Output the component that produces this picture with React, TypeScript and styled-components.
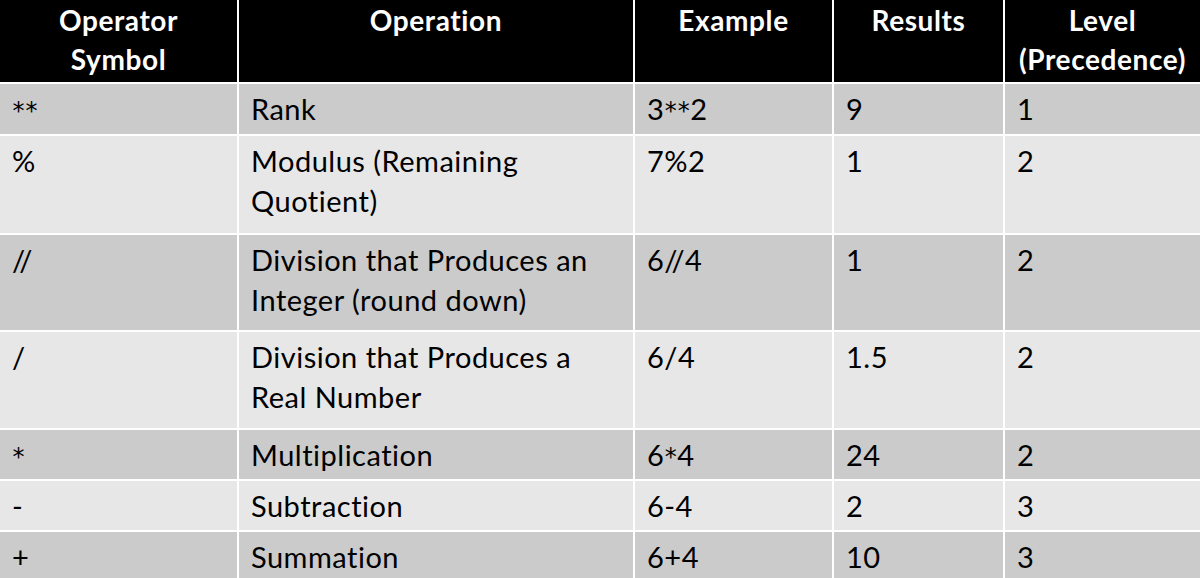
import React from "react";
import styled, { createGlobalStyle } from "styled-components";

const Global = createGlobalStyle`
  html, body { margin: 0; padding: 0; background: #ffffff; }
  body { font-family: Lato, "Open Sans", "Liberation Sans", sans-serif; }
`;

const COLS = "237px 394px 197px 169px 195px";

const Table = styled.div`
  width: 1200px;
  height: 578px;
  overflow: hidden;
  display: flex;
  flex-direction: column;
  gap: 2px;
  background: #ffffff;
`;

const Row = styled.div<{ $h: number }>`
  display: grid;
  grid-template-columns: ${COLS};
  gap: 2px;
  height: ${(p) => p.$h}px;
  flex: none;
`;

const HeadCell = styled.div`
  background: #000000;
  color: #ffffff;
  font-weight: 700;
  font-size: 28px;
  letter-spacing: 0.6px;
  line-height: 39px;
  text-align: center;
  padding: 1px 2px 0;
  white-space: pre-line;
`;

const Cell = styled.div<{ $dark: boolean }>`
  background: ${(p) => (p.$dark ? "#cbcbcb" : "#e7e7e7")};
  color: #000000;
  font-size: 29px;
  letter-spacing: 0.5px;
  line-height: 40px;
  padding: 5px 10px 0 12px;
  white-space: pre-line;
`;

const Star = styled.span`
  display: inline-block;
  font-family: "DejaVu Sans", sans-serif;
  font-size: 24px;
  line-height: 1;
  vertical-align: 0.05em;
  letter-spacing: 0;
  margin: 0 0.5px;
`;

const renderText = (s: string) =>
  s.split(/(\*)/).map((part, k) => (part === "*" ? <Star key={k}>*</Star> : part));

const headers = ["Operator\nSymbol", "Operation", "Example", "Results", "Level\n(Precedence)"];

const rows: { h: number; cells: string[] }[] = [
  { h: 50, cells: ["**", "Rank", "3**2", "9", "1"] },
  { h: 97, cells: ["%", "Modulus (Remaining\nQuotient)", "7%2", "1", "2"] },
  { h: 95, cells: ["//", "Division that Produces an\nInteger (round down)", "6//4", "1", "2"] },
  { h: 96, cells: ["/", "Division that Produces a\nReal Number", "6/4", "1.5", "2"] },
  { h: 49, cells: ["*", "Multiplication", "6*4", "24", "2"] },
  { h: 49, cells: ["-", "Subtraction", "6-4", "2", "3"] },
  { h: 50, cells: ["+", "Summation", "6+4", "10", "3"] },
];

export default function App() {
  return (
    <>
      <Global />
      <Table>
        <Row $h={82}>
          {headers.map((h) => (
            <HeadCell key={h}>{h}</HeadCell>
          ))}
        </Row>
        {rows.map((r, i) => (
          <Row key={i} $h={r.h}>
            {r.cells.map((c, j) => (
              <Cell key={j} $dark={i % 2 === 0}>
                {renderText(c)}
              </Cell>
            ))}
          </Row>
        ))}
      </Table>
    </>
  );
}
